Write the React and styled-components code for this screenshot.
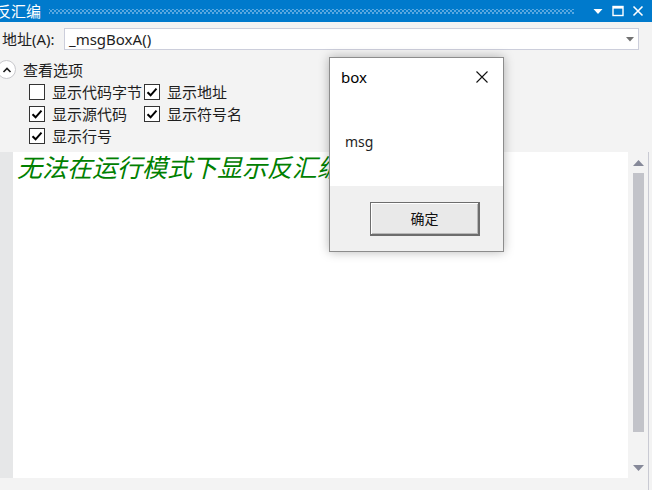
import React from 'react';
import styled, { createGlobalStyle } from 'styled-components';

const GlobalStyle = createGlobalStyle`
  html, body {
    margin: 0;
    padding: 0;
    background: #f3f3f3;
    overflow: hidden;
  }
  * { box-sizing: border-box; }
`;

const UI_FONT = '"Noto Sans", "Noto Sans CJK SC", sans-serif';

const options = [
  { label: '显示代码字节', checked: false },
  { label: '显示地址', checked: true },
  { label: '显示源代码', checked: true },
  { label: '显示符号名', checked: true },
  { label: '显示行号', checked: true },
];

export default function App() {
  return (
    <>
      <GlobalStyle />
      <Window>
        <TitleBar>
          <TitleText>反汇编</TitleText>
          <Grip />
          <TitleIcon viewBox="0 0 12 12">
            <polygon points="1.5,4 10.5,4 6,9" fill="#fff" />
          </TitleIcon>
          <TitleIcon viewBox="0 0 12 12">
            <rect x="1" y="1.5" width="10" height="9" fill="none" stroke="#fff" strokeWidth="1.4" />
            <rect x="1" y="1" width="10" height="2.6" fill="#fff" />
          </TitleIcon>
          <TitleIcon viewBox="0 0 12 12">
            <path d="M1.5 1.5 L10.5 10.5 M10.5 1.5 L1.5 10.5" stroke="#fff" strokeWidth="1.6" />
          </TitleIcon>
        </TitleBar>

        <AddressRow>
          <AddressLabel>地址(A):</AddressLabel>
          <Combo>
            <ComboText>_msgBoxA()</ComboText>
            <ComboArrow viewBox="0 0 8 5">
              <polygon points="0,0 8,0 4,4.5" fill="#717171" />
            </ComboArrow>
          </Combo>
        </AddressRow>

        <OptionsHeader>
          <Expander>
            <svg width="10" height="8" viewBox="0 0 10 8">
              <path d="M1.5 6 L5 2.5 L8.5 6" fill="none" stroke="#1e1e1e" strokeWidth="1.6" />
            </svg>
          </Expander>
          <HeaderText>查看选项</HeaderText>
        </OptionsHeader>

        <OptionGrid>
          {options.map((o) => (
            <OptionItem key={o.label}>
              <CheckBox>
                {o.checked && (
                  <svg width="14" height="14" viewBox="0 0 14 14">
                    <path d="M2.5 7.2 L5.6 10.3 L11.5 3.6" fill="none" stroke="#000" strokeWidth="2" />
                  </svg>
                )}
              </CheckBox>
              <OptionText>{o.label}</OptionText>
            </OptionItem>
          ))}
        </OptionGrid>

        <Lower>
          <LowerMain>
            <CodeArea>
              <Gutter />
              <CodeContent>
                <Notice>无法在运行模式下显示反汇编</Notice>
              </CodeContent>
              <ScrollBar>
                <ScrollButton>
                  <svg width="11" height="6" viewBox="0 0 11 6">
                    <polygon points="0,6 11,6 5.5,0" fill="#868999" />
                  </svg>
                </ScrollButton>
                <Thumb />
                <Track />
                <ScrollButton>
                  <svg width="11" height="6" viewBox="0 0 11 6">
                    <polygon points="0,0 11,0 5.5,6" fill="#868999" />
                  </svg>
                </ScrollButton>
              </ScrollBar>
            </CodeArea>
            <BottomStrip />
          </LowerMain>
          <Edge />
        </Lower>

        <Dialog>
          <DialogTitleRow>
            <DialogTitle>box</DialogTitle>
            <svg width="12" height="12" viewBox="0 0 12 12">
              <path d="M0.5 0.5 L11.5 11.5 M11.5 0.5 L0.5 11.5" stroke="#111" strokeWidth="1.1" />
            </svg>
          </DialogTitleRow>
          <DialogMessage>msg</DialogMessage>
          <DialogFooter>
            <DialogButton>确定</DialogButton>
          </DialogFooter>
        </Dialog>
      </Window>
    </>
  );
}

const Window = styled.div`
  position: relative;
  width: 652px;
  height: 490px;
  display: flex;
  flex-direction: column;
  background: #f3f3f3;
  font-family: ${UI_FONT};
  overflow: hidden;
`;

const TitleBar = styled.div`
  height: 22px;
  flex-shrink: 0;
  display: flex;
  align-items: center;
  background: #007acc;
  padding-right: 8px;
`;

const TitleText = styled.span`
  margin-left: -4px;
  color: #fff;
  font-family: "Noto Sans CJK SC", sans-serif;
  font-size: 15px;
  line-height: 22px;
`;

const Grip = styled.div`
  flex: 1;
  height: 5px;
  margin: 0 10px 0 8px;
  background-color: #007acc;
  background-image:
    radial-gradient(circle, #59a8e0 0.8px, transparent 1px),
    radial-gradient(circle, #59a8e0 0.8px, transparent 1px);
  background-size: 4px 4px;
  background-position: 0 0, 2px 2px;
`;

const TitleIcon = styled.svg`
  width: 12px;
  height: 12px;
  margin-left: 8px;
  flex-shrink: 0;
`;

const AddressRow = styled.div`
  height: 34px;
  flex-shrink: 0;
  display: flex;
  align-items: center;
  padding: 0 13px 0 2px;
  gap: 6px;
`;

const AddressLabel = styled.span`
  font-size: 15px;
  color: #1e1e1e;
  line-height: 20px;
  width: 56px;
`;

const Combo = styled.div`
  flex: 1;
  height: 22px;
  display: flex;
  align-items: center;
  background: #fff;
  border: 1px solid #cccedb;
  padding: 0 4px;
`;

const ComboText = styled.span`
  flex: 1;
  font-size: 15px;
  color: #1e1e1e;
  line-height: 20px;
`;

const ComboArrow = styled.svg`
  width: 8px;
  height: 5px;
`;

const OptionsHeader = styled.div`
  height: 25px;
  flex-shrink: 0;
  display: flex;
  align-items: center;
  padding-top: 2px;
  gap: 7px;
`;

const Expander = styled.div`
  width: 19px;
  height: 19px;
  margin-left: -3px;
  border-radius: 50%;
  border: 1px solid #c8c8cc;
  background: #fff;
  display: flex;
  align-items: center;
  justify-content: center;
`;

const HeaderText = styled.span`
  font-size: 15px;
  color: #1e1e1e;
  line-height: 20px;
`;

const OptionGrid = styled.div`
  display: grid;
  grid-template-columns: 115px 115px;
  grid-auto-rows: 22px;
  padding-left: 29px;
  margin-bottom: 5px;
  flex-shrink: 0;
`;

const OptionItem = styled.div`
  display: flex;
  align-items: center;
  gap: 7px;
  white-space: nowrap;
`;

const CheckBox = styled.div`
  width: 16px;
  height: 16px;
  flex-shrink: 0;
  border: 1px solid #333;
  background: #fff;
  display: flex;
  align-items: center;
  justify-content: center;
`;

const OptionText = styled.span`
  font-size: 15px;
  color: #1e1e1e;
  line-height: 20px;
`;

const Lower = styled.div`
  flex: 1;
  display: flex;
  min-height: 0;
`;

const LowerMain = styled.div`
  flex: 1;
  display: flex;
  flex-direction: column;
`;

const Edge = styled.div`
  width: 4px;
  border-left: 1px solid #c9cad3;
  background: #f3f3f3;
`;

const CodeArea = styled.div`
  flex: 1;
  display: flex;
`;

const Gutter = styled.div`
  width: 13px;
  background: #e6e7e8;
`;

const CodeContent = styled.div`
  flex: 1;
  background: #fff;
  padding-left: 4px;
  overflow: hidden;
`;

const Notice = styled.div`
  font-family: "Noto Sans CJK SC", sans-serif;
  font-style: italic;
  font-size: 25px;
  line-height: 28px;
  color: #008000;
  white-space: nowrap;
`;

const ScrollBar = styled.div`
  width: 20px;
  display: flex;
  flex-direction: column;
  align-items: center;
  background: #f3f3f3;
`;

const ScrollButton = styled.div`
  height: 21px;
  display: flex;
  align-items: center;
  justify-content: center;
`;

const Thumb = styled.div`
  width: 11px;
  height: 259px;
  background: #c2c3c9;
`;

const Track = styled.div`
  flex: 1;
`;

const BottomStrip = styled.div`
  height: 12px;
  background: #f3f3f3;
`;

const Dialog = styled.div`
  position: absolute;
  left: 329px;
  top: 57px;
  width: 175px;
  height: 195px;
  display: flex;
  flex-direction: column;
  background: #fff;
  border: 1px solid #8c8c8c;
  box-shadow: 0 0 10px rgba(0, 0, 0, 0.28);
`;

const DialogTitleRow = styled.div`
  height: 38px;
  display: flex;
  align-items: center;
  justify-content: space-between;
  padding: 0 15px 0 11px;
`;

const DialogTitle = styled.span`
  font-size: 15px;
  color: #000;
  line-height: 20px;
`;

const DialogMessage = styled.div`
  height: 90px;
  display: flex;
  align-items: center;
  padding-left: 15px;
  font-size: 14px;
  color: #1e1e1e;
`;

const DialogFooter = styled.div`
  flex: 1;
  background: #f0f0f0;
  display: flex;
  align-items: center;
  justify-content: flex-end;
  padding-right: 23px;
`;

const DialogButton = styled.div`
  width: 110px;
  height: 34px;
  display: flex;
  align-items: center;
  justify-content: center;
  font-family: "Noto Sans CJK SC", sans-serif;
  font-size: 14px;
  color: #111;
  background: #e9e9e9;
  border: 2px solid #6d6d6d;
  border-top-width: 1px;
  border-left-width: 1px;
  box-shadow: inset 1px 1px 0 #fff, inset -1px -1px 0 #b8b8b8;
`;
